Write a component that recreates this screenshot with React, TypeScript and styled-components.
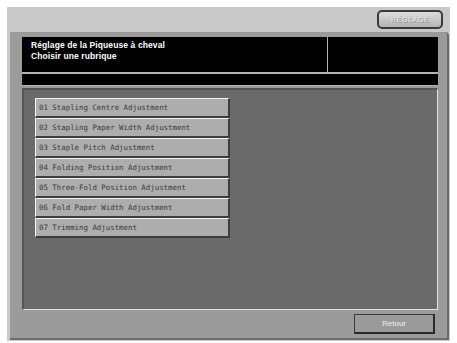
import React from 'react';
import styled, { createGlobalStyle } from 'styled-components';

const GlobalStyle = createGlobalStyle`
  html, body {
    margin: 0;
    padding: 0;
    background: #ffffff;
  }
`;

const Screen = styled.div`
  width: 457px;
  height: 343px;
  padding: 7px 7px 2px 7px;
  box-sizing: border-box;
`;

const Frame = styled.div`
  height: 100%;
  background: #c9c9c9;
  display: flex;
  flex-direction: column;
`;

const TopRow = styled.div`
  display: flex;
  justify-content: flex-end;
  padding: 3px 7px 0 0;
`;

const SettingButton = styled.button`
  width: 66px;
  height: 19px;
  box-sizing: border-box;
  border: 2px solid #3a3a3a;
  border-radius: 5px;
  background: linear-gradient(#dcdcdc, #b4b4b4);
  color: #e8e8e8;
  text-shadow: 1px 1px 0 #8a8a8a;
  font-family: 'Liberation Sans', Arial, sans-serif;
  font-size: 7px;
  letter-spacing: 0.6px;
  padding: 0;
`;

const Panel = styled.div`
  margin: 3px 1px 1px 3px;
  flex: 1;
  background: #9b9b9b;
  border-right: 2px solid #6c6c6c;
  border-bottom: 2px solid #6c6c6c;
  border-top-right-radius: 4px;
  padding: 5px 9px 0 12px;
  display: flex;
  flex-direction: column;
`;

const Header = styled.div`
  height: 35px;
  background: #000;
  display: flex;
  border-bottom: 2px solid #b4b4b4;
`;

const HeaderTitle = styled.div`
  width: 296px;
  border-right: 1px solid #b4b4b4;
  padding: 3px 0 0 9px;
  color: #ffffff;
  font-family: 'Liberation Sans', Arial, sans-serif;
  font-weight: bold;
  font-size: 8.5px;
  line-height: 11px;
  letter-spacing: 0.1px;
`;

const HeaderSide = styled.div`
  flex: 1;
`;

const InfoBar = styled.div`
  height: 11px;
  background: #000;
  border-bottom: 1px solid #b4b4b4;
`;

const Content = styled.div`
  margin-top: 2px;
  height: 222px;
  box-sizing: border-box;
  background: #6a6a6a;
  border-top: 2px solid #555;
  border-left: 2px solid #555;
  border-right: 1px solid #e0e0e0;
  border-bottom: 1px solid #e0e0e0;
  padding: 8px 0 0 11px;
  display: flex;
  flex-direction: column;
`;

const MenuItem = styled.div`
  width: 195px;
  height: 20px;
  box-sizing: border-box;
  background: #adadad;
  border-top: 1px solid #f4f4f4;
  border-left: 1px solid #f4f4f4;
  border-right: 2px solid #3c3c3c;
  border-bottom: 2px solid #3c3c3c;
  padding-left: 3px;
  display: flex;
  align-items: center;
  color: #3a3a3a;
  font-family: 'DejaVu Sans Mono', 'Liberation Mono', monospace;
  font-size: 7.4px;
`;

const Footer = styled.div`
  display: flex;
  justify-content: flex-end;
  padding: 4px 3px 0 0;
`;

const BackButton = styled.button`
  width: 81px;
  height: 20px;
  box-sizing: border-box;
  background: #9a9a9a;
  border-top: 1px solid #3a3a3a;
  border-left: 1px solid #3a3a3a;
  border-right: 2px solid #2a2a2a;
  border-bottom: 2px solid #2a2a2a;
  color: #f0f0f0;
  font-family: 'Liberation Sans', Arial, sans-serif;
  font-size: 8px;
  padding: 0;
`;

const items = [
  '01 Stapling Centre Adjustment',
  '02 Stapling Paper Width Adjustment',
  '03 Staple Pitch Adjustment',
  '04 Folding Position Adjustment',
  '05 Three-Fold Position Adjustment',
  '06 Fold Paper Width Adjustment',
  '07 Trimming Adjustment',
];

const App: React.FC = () => {
  return (
    <>
      <GlobalStyle />
      <Screen>
        <Frame>
          <TopRow>
            <SettingButton>RÉGLAGE</SettingButton>
          </TopRow>
          <Panel>
            <Header>
              <HeaderTitle>
                Réglage de la Piqueuse à cheval
                <br />
                Choisir une rubrique
              </HeaderTitle>
              <HeaderSide />
            </Header>
            <InfoBar />
            <Content>
              {items.map(item => (
                <MenuItem key={item}>{item}</MenuItem>
              ))}
            </Content>
            <Footer>
              <BackButton>Retour</BackButton>
            </Footer>
          </Panel>
        </Frame>
      </Screen>
    </>
  );
};

export default App;
